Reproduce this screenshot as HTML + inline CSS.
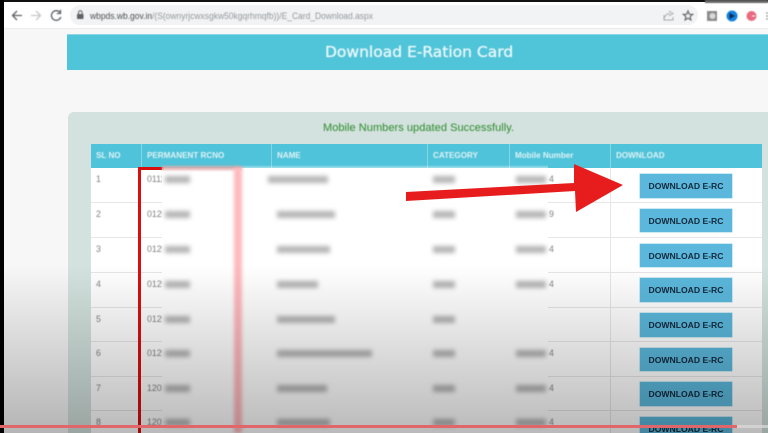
<!DOCTYPE html>
<html>
<head>
<meta charset="utf-8">
<style>
html,body{margin:0;padding:0;width:768px;height:433px;overflow:hidden;background:#f7f7f7;font-family:"Liberation Sans",sans-serif}
#p{position:relative;width:768px;height:433px;overflow:hidden}
#p div,#p span.a{position:absolute}
.t{white-space:nowrap;filter:blur(.45px)}
.th{top:150.5px;font-size:8.1px;font-weight:bold;color:#dff3f7;white-space:nowrap;filter:blur(.5px)}
.c{font-size:8.8px;color:#808080;white-space:nowrap;filter:blur(.45px)}
.b{left:640px;width:92px;height:23.5px;background:#5bb8dc;border:0;text-align:center;line-height:24px;font-size:8.6px;font-weight:bold;color:#14293c;white-space:nowrap;box-shadow:0 0 0 .5px #9ad4e8}
.b span{filter:blur(.35px);display:inline-block}
.l{left:91px;width:671px;height:1px;background:#e6e6e6}
.bl{background:#b4b4b4;height:7px;filter:blur(2.4px)}
</style>
</head>
<body>
<div id="p">
  <!-- Browser chrome -->
  <div style="left:0;top:0;width:768px;height:28px;background:#fff;border-bottom:1px solid #ececec"></div>
  <div style="left:0;top:0;width:768px;height:1.5px;background:#111"></div>
  <div style="left:705px;top:0;width:63px;height:3px;background:#666;filter:blur(.6px)"></div>
  <div style="left:0;top:0;width:4px;height:433px;background:#000"></div>
  <div style="left:70px;top:5px;width:628px;height:20px;border-radius:10px;background:#f1f3f4"></div>
  <svg style="position:absolute;left:0;top:0;filter:blur(.45px)" width="768" height="30" viewBox="0 0 768 30" fill="none">
    <path d="M22 15.5H12.5M17 11l-4.5 4.5L17 20" stroke="#5f6368" stroke-width="1.3"/>
    <path d="M31 15.5h9.5M36 11l4.5 4.5L36 20" stroke="#c4c7ca" stroke-width="1.3"/>
    <path d="M60 12.5a4.800 4.800 0 1 0 .8 4.500M60.500 9.800v3.700h-3.700" stroke="#5f6368" stroke-width="1.300"/>
    <rect x="77" y="14" width="6.500" height="5" rx=".6" fill="#5f6368"/>
    <path d="M78.500 14v-1.500a1.800 1.800 0 0 1 3.600 0V14" stroke="#5f6368" stroke-width="1"/>
    <path d="M664 15v5h9v-3M664 19c1-4 3-5.500 6-5.500M669 11l4 2.500-4 2.500" stroke="#a8acb0" stroke-width="1"/>
    <path d="M688 11l1.300 3.200 3.400.2-2.600 2.200.8 3.300-2.900-1.800-2.900 1.800.8-3.300-2.600-2.200 3.400-.2z" stroke="#5f6368" stroke-width="1.100"/>
    <rect x="707" y="11" width="10" height="10" fill="#8c8c8c"/>
    <circle cx="712.500" cy="16" r="3" fill="#d8d8d8"/>
    <circle cx="732" cy="16" r="5.500" fill="#1282e0"/>
    <path d="M729.500 13l5.500 3-5.500 3z" fill="#132a50"/>
    <circle cx="751.500" cy="16" r="5" fill="#e96a80"/>
    <path d="M752 16h3" stroke="#fff" stroke-width="1"/>
    <circle cx="767" cy="13" r=".8" fill="#777"/><circle cx="767" cy="16" r=".8" fill="#777"/><circle cx="767" cy="19" r=".8" fill="#777"/>
    <text x="90" y="19" font-family="Liberation Sans, sans-serif" font-size="9" fill="#94989d" textLength="283" lengthAdjust="spacingAndGlyphs"><tspan fill="#4a4e52">wbpds.wb.gov.in</tspan>/(S(ownyrjcwxsgkw50kgqrhmqfb))/E_Card_Download.aspx</text>
  </svg>

  <!-- Banner -->
  <div style="left:67px;top:34px;width:701px;height:36px;background:#50c4d8;border-top:1px solid #8ed8e5;box-sizing:border-box"></div>
  <span class="a t" style="left:325px;top:41px;font-family:'DejaVu Sans',sans-serif;font-size:15.500px;line-height:22px;color:#e8f8fa;-webkit-text-stroke:.35px #e8f8fa">Download E-Ration Card</span>

  <!-- Panel -->
  <div style="left:68px;top:112px;width:700px;height:330px;background:#d3e2de;border-radius:6px 0 0 0"></div>
  <span class="a t" style="left:323px;top:122px;font-size:11px;line-height:13px;color:#2d8a2d;letter-spacing:.05px">Mobile Numbers updated Successfully.</span>

  <!-- Table -->
  <div style="left:91px;top:168px;width:671px;height:270px;background:#fff"></div>
  <div style="left:91px;top:144px;width:671px;height:24px;background:#4fc3d9"></div>
  <div style="left:141px;top:144px;width:1px;height:24px;background:#85d6e5"></div>
  <div style="left:271px;top:144px;width:1px;height:24px;background:#85d6e5"></div>
  <div style="left:427px;top:144px;width:1px;height:24px;background:#85d6e5"></div>
  <div style="left:509px;top:144px;width:1px;height:24px;background:#85d6e5"></div>
  <div style="left:610px;top:144px;width:1px;height:24px;background:#85d6e5"></div>
  <div style="left:610px;top:168px;width:1px;height:270px;background:#e6e6e6"></div>
  <span class="a th" style="left:96px">SL NO</span>
  <span class="a th" style="left:147px">PERMANENT RCNO</span>
  <span class="a th" style="left:277px">NAME</span>
  <span class="a th" style="left:433px">CATEGORY</span>
  <span class="a th" style="left:515px">Mobile Number</span>
  <span class="a th" style="left:616px">DOWNLOAD</span>

  <div class="l" style="top:202px"></div><div class="l" style="top:237px"></div><div class="l" style="top:272px"></div><div class="l" style="top:307px"></div><div class="l" style="top:341px"></div><div class="l" style="top:376px"></div><div class="l" style="top:410px"></div>

  <span class="a c" style="left:96px;top:174px">1</span><span class="a c" style="left:147px;top:174px">0111</span>
  <span class="a c" style="left:96px;top:209px">2</span><span class="a c" style="left:147px;top:209px">0129</span>
  <span class="a c" style="left:96px;top:244px">3</span><span class="a c" style="left:147px;top:244px">0129</span>
  <span class="a c" style="left:96px;top:279px">4</span><span class="a c" style="left:147px;top:279px">0129</span>
  <span class="a c" style="left:96px;top:314px">5</span><span class="a c" style="left:147px;top:314px">0129</span>
  <span class="a c" style="left:96px;top:348px">6</span><span class="a c" style="left:147px;top:348px">0129</span>
  <span class="a c" style="left:96px;top:383px">7</span><span class="a c" style="left:147px;top:383px">1203</span>
  <span class="a c" style="left:96px;top:417px">8</span><span class="a c" style="left:147px;top:417px">1203</span>

  <span class="a c" style="left:549px;top:174px">4</span>
  <span class="a c" style="left:549px;top:209px">9</span>
  <span class="a c" style="left:549px;top:244px">4</span>
  <span class="a c" style="left:549px;top:279px">4</span>
  <span class="a c" style="left:549px;top:348px">4</span>
  <span class="a c" style="left:549px;top:383px">4</span>
  <span class="a c" style="left:549px;top:417px">4</span>

  <div class="b" style="top:174px"><span>DOWNLOAD E-RC</span></div>
  <div class="b" style="top:208.500px"><span>DOWNLOAD E-RC</span></div>
  <div class="b" style="top:243.500px"><span>DOWNLOAD E-RC</span></div>
  <div class="b" style="top:278px"><span>DOWNLOAD E-RC</span></div>
  <div class="b" style="top:313px"><span>DOWNLOAD E-RC</span></div>
  <div class="b" style="top:347.500px"><span>DOWNLOAD E-RC</span></div>
  <div class="b" style="top:382px"><span>DOWNLOAD E-RC</span></div>
  <div class="b" style="top:416.500px"><span>DOWNLOAD E-RC</span></div>

  <!-- Red box left line -->
  <div style="left:138px;top:167px;width:2.500px;height:266px;background:#d90f0f"></div>
  <div style="left:138px;top:167px;width:26px;height:2.500px;background:#d90f0f"></div>

  <!-- Blur overlay -->
  <div style="left:162px;top:170px;width:386px;height:263px;background:#fff"></div>
  <div style="left:162px;top:165px;width:386px;height:6px;background:linear-gradient(rgba(255,255,255,0),#fff)"></div>
  <div style="left:162px;top:166px;width:80px;height:4px;background:#d99a9a;opacity:.8;filter:blur(1.200px)"></div>
  <div style="left:234px;top:168px;width:8px;height:265px;background:#ffb8bc;filter:blur(1.800px)"></div>

  <!-- Blurred values -->
  <div class="bl" style="left:165px;top:176px;width:25px"></div><div class="bl" style="left:268px;top:176px;width:60px"></div><div class="bl" style="left:433px;top:176px;width:22px"></div><div class="bl" style="left:516px;top:176px;width:30px"></div>
  <div class="bl" style="left:165px;top:211px;width:25px"></div><div class="bl" style="left:277px;top:211px;width:58px"></div><div class="bl" style="left:433px;top:211px;width:22px"></div><div class="bl" style="left:516px;top:211px;width:30px"></div>
  <div class="bl" style="left:165px;top:246px;width:25px"></div><div class="bl" style="left:277px;top:246px;width:53px"></div><div class="bl" style="left:433px;top:246px;width:22px"></div><div class="bl" style="left:516px;top:246px;width:30px"></div>
  <div class="bl" style="left:165px;top:281px;width:25px"></div><div class="bl" style="left:277px;top:281px;width:41px"></div><div class="bl" style="left:433px;top:281px;width:22px"></div><div class="bl" style="left:516px;top:281px;width:30px"></div>
  <div class="bl" style="left:165px;top:316px;width:25px"></div><div class="bl" style="left:277px;top:316px;width:58px"></div><div class="bl" style="left:433px;top:316px;width:22px"></div>
  <div class="bl" style="left:165px;top:350px;width:25px"></div><div class="bl" style="left:277px;top:350px;width:95px"></div><div class="bl" style="left:433px;top:350px;width:22px"></div><div class="bl" style="left:516px;top:350px;width:30px"></div>
  <div class="bl" style="left:165px;top:385px;width:25px"></div><div class="bl" style="left:277px;top:385px;width:50px"></div><div class="bl" style="left:433px;top:385px;width:22px"></div><div class="bl" style="left:516px;top:385px;width:30px"></div>
  <div class="bl" style="left:165px;top:419px;width:25px"></div><div class="bl" style="left:277px;top:419px;width:53px"></div><div class="bl" style="left:433px;top:419px;width:22px"></div><div class="bl" style="left:516px;top:419px;width:30px"></div>

  <!-- Arrow -->
  <svg style="position:absolute;left:0;top:0" width="768" height="433" viewBox="0 0 768 433">
    <path d="M406 192L574 183L574 164L623 185L576 212L575 191L406 201Z" fill="#e71c1c"/>
  </svg>

  <!-- Bottom gradient -->
  <div style="left:4px;top:265px;width:764px;height:168px;background:linear-gradient(rgba(0,0,0,0),rgba(0,0,0,.27))"></div>

  <!-- Progress bar -->
  <div style="left:0;top:424.500px;width:768px;height:3px;background:rgba(220,220,220,.7)"></div>
  <div style="left:0;top:424.500px;width:737px;height:3px;background:#e0666a"></div>
</div>
</body>
</html>
